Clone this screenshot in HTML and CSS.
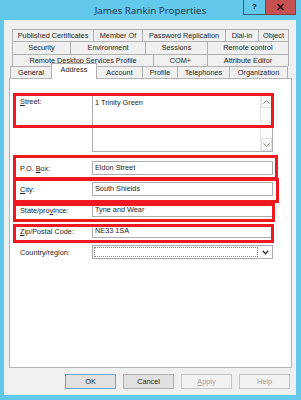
FILE: index.html
```html
<!DOCTYPE html>
<html lang="en">
<head>
    <meta charset="UTF-8">
    <title>James Rankin Properties</title>
    <link rel="stylesheet" href="styles.css">
</head>
<body>
    <div class="window">
        <div class="titlebar">
            <span></span>
            <div class="title">James Rankin Properties</div>
            <div class="caption-btns">
                <span class="cap-help">?</span>
                <span class="cap-close">
                    <svg width="9" height="8" viewBox="0 0 9 8"><path d="M1.5 1 L7.5 7 M7.5 1 L1.5 7" stroke="#2a1a1a" stroke-width="1.6"/></svg>
                </span>
            </div>
        </div>

        <div class="client">
            <div class="tabs">
                <div class="tab-row">
                    <div class="tab w81">Published Certificates</div>
                    <div class="tab w49">Member Of</div>
                    <div class="tab w83">Password Replication</div>
                    <div class="tab w33">Dial-in</div>
                    <div class="tab w30">Object</div>
                </div>
                <div class="tab-row tall">
                    <div class="tab w58">Security</div>
                    <div class="tab w75">Environment</div>
                    <div class="tab w62">Sessions</div>
                    <div class="tab w81">Remote control</div>
                </div>
                <div class="tab-row">
                    <div class="tab w141">Remote Desktop Services Profile</div>
                    <div class="tab w54">COM+</div>
                    <div class="tab w81">Attribute Editor</div>
                </div>
                <div class="tab-row front">
                    <div class="tab w42">General</div>
                    <div class="tab w45 selected">Address</div>
                    <div class="tab w46">Account</div>
                    <div class="tab w35">Profile</div>
                    <div class="tab w52">Telephones</div>
                    <div class="tab w58">Organization</div>
                </div>
            </div>

            <div class="panel">
                <div class="form">
                    <label class="lbl"><u>S</u>treet:</label>
                    <div class="textarea">
                        <div class="ta-text">1 Trinity Green</div>
                        <div class="scrollbar">
                            <span class="sb-btn">
                                <svg width="7" height="4" viewBox="0 0 7 4"><path d="M0.5 3.5 L3.5 0.8 L6.5 3.5" fill="none" stroke="#8a8a8a" stroke-width="1"/></svg>
                            </span>
                            <span class="sb-track"></span>
                            <span class="sb-btn">
                                <svg width="7" height="4" viewBox="0 0 7 4"><path d="M0.5 0.5 L3.5 3.2 L6.5 0.5" fill="none" stroke="#8a8a8a" stroke-width="1"/></svg>
                            </span>
                        </div>
                    </div>

                    <label class="lbl">P.O. <u>B</u>ox:</label>
                    <div class="input">Eldon Street</div>

                    <label class="lbl"><u>C</u>ity:</label>
                    <div class="input">South Shields</div>

                    <label class="lbl">State/pro<u>v</u>ince:</label>
                    <div class="input">Tyne and Wear</div>

                    <label class="lbl"><u>Z</u>ip/Postal Code:</label>
                    <div class="input">NE33 1SA</div>

                    <label class="lbl">Country/region:</label>
                    <div class="select">
                        <span class="focus-rect"></span>
                        <svg width="7" height="5" viewBox="0 0 7 5"><path d="M0.7 0.8 L3.5 3.8 L6.3 0.8" fill="none" stroke="#333" stroke-width="1.3"/></svg>
                    </div>
                </div>

                <!-- highlight boxes drawn over the screenshot -->
                <div class="mark mark-street"></div>
                <div class="mark mark-po"></div>
                <div class="mark mark-city"></div>
                <div class="mark mark-state"></div>
                <div class="mark mark-zip"></div>
            </div>

            <div class="buttons">
                <div class="btn default">OK</div>
                <div class="btn">Cancel</div>
                <div class="btn disabled"><u>A</u>pply</div>
                <div class="btn disabled">Help</div>
            </div>
        </div>
    </div>
</body>
</html>
```

FILE: styles.css
```css
* {
    box-sizing: border-box;
}
body {
    margin: 0;
    background: #62c8ec;
    font-family: "Liberation Sans", Arial, sans-serif;
    font-size: 7.3px;
    color: #1e1e1e;
}
.window {
    width: 301px;
    height: 400px;
    background: #62c8ec;
}
.titlebar {
    height: 20px;
    display: grid;
    grid-template-columns: 1fr auto 1fr;
}
.title {
    font-family: "Noto Sans", "Open Sans", sans-serif;
    font-size: 9.8px;
    line-height: 21px;
    color: #23384a;
}
.caption-btns {
    justify-self: end;
    display: flex;
    margin-right: 5px;
    height: 15px;
}
.cap-help {
    width: 22px;
    border: 1px solid #2d5d78;
    border-top: none;
    border-right: none;
    text-align: center;
    font-weight: bold;
    font-size: 8px;
    line-height: 13px;
    color: #1c2a35;
}
.cap-close {
    width: 31px;
    background: #c75050;
    border: 1px solid #8f3a3a;
    border-top: none;
    display: flex;
    align-items: center;
    justify-content: center;
}
.client {
    margin: 0 5px 0 4px;
    height: 375px;
    background: #f0f0f0;
    padding: 9px 4px 6px 5px;
}

/* tabs */
.tab-row {
    display: flex;
    align-items: flex-start;
    margin-left: 3px;
    height: 12px;
}
.tab-row.tall {
    height: 13px;
}
.tab-row.front {
    margin-left: 1px;
}
.tab {
    height: 100%;
    background: #f0f0f0;
    border: 1px solid #b0b0b0;
    border-bottom: none;
    margin-left: -1px;
    text-align: center;
    line-height: 11px;
    white-space: nowrap;
    overflow: hidden;
}
.tab:first-child {
    margin-left: 0;
}
.tab.selected {
    position: relative;
    z-index: 2;
    background: #fff;
    margin-top: -3px;
    height: 16px;
    line-height: 11px;
}
.w30 { width: 31px; }
.w33 { width: 34px; }
.w35 { width: 36px; }
.w42 { width: 42px; }
.w45 { width: 46px; }
.w46 { width: 47px; }
.w49 { width: 50px; }
.w52 { width: 53px; }
.w54 { width: 55px; }
.w58 { width: 59px; }
.w62 { width: 63px; }
.w75 { width: 76px; }
.w81 { width: 82px; }
.w83 { width: 84px; }
.w141 { width: 142px; }
.tab-row > .tab:first-child {
    margin-left: 0;
}

/* panel */
.panel {
    position: relative;
    height: 290px;
    background: #fff;
    border: 1px solid #b4b4b4;
}
.form {
    display: grid;
    grid-template-columns: 72px 181px;
    grid-template-rows: 60px repeat(5, 14px);
    row-gap: 7px;
    padding: 15px 0 0 10px;
}
.lbl {
    line-height: 14px;
    padding-top: 1px;
}
.textarea {
    height: 58px;
    border: 1px solid #abadb3;
    display: flex;
}
.ta-text {
    flex: 1;
    padding: 2px 0 0 2px;
    line-height: 12px;
}
.scrollbar {
    width: 12px;
    display: flex;
    flex-direction: column;
    border-left: 1px solid #e6e6e6;
    background: #fafafa;
}
.sb-btn {
    height: 13px;
    display: flex;
    align-items: center;
    justify-content: center;
    border: 1px solid #e2e2e2;
    background: #f7f7f7;
}
.sb-track {
    flex: 1;
}
.input {
    height: 14px;
    border: 1px solid #abadb3;
    padding-left: 2px;
    line-height: 12px;
    white-space: nowrap;
}
.select {
    height: 14px;
    border: 1px solid #acacac;
    display: flex;
    align-items: center;
    padding: 1px 3px 1px 1px;
    gap: 4px;
}
.focus-rect {
    flex: 1;
    height: 10px;
    border: 1px dotted #888;
}

/* red highlight boxes */
.mark {
    position: absolute;
    border: 3px solid #ee1820;
    z-index: 3;
}
.mark-street { left: 3px; top: 14px; width: 261px; height: 35px; }
.mark-po { left: 3px; top: 76px; width: 265px; height: 25px; }
.mark-city { left: 3px; top: 99px; width: 266px; height: 25px; }
.mark-state { left: 3px; top: 124px; width: 262px; height: 19px; }
.mark-zip { left: 3px; top: 145px; width: 261px; height: 19px; }

/* dialog buttons */
.buttons {
    display: flex;
    justify-content: flex-end;
    gap: 7px;
    margin-top: 6px;
    padding-right: 2px;
}
.btn {
    width: 51px;
    height: 15px;
    border: 1px solid #adadad;
    background: #e1e1e1;
    text-align: center;
    line-height: 13px;
}
.btn.default {
    border-color: #6fa3d6;
}
.btn.disabled {
    background: #f2f2f2;
    border-color: #c6c6c6;
    color: #a3a3a3;
}
```
